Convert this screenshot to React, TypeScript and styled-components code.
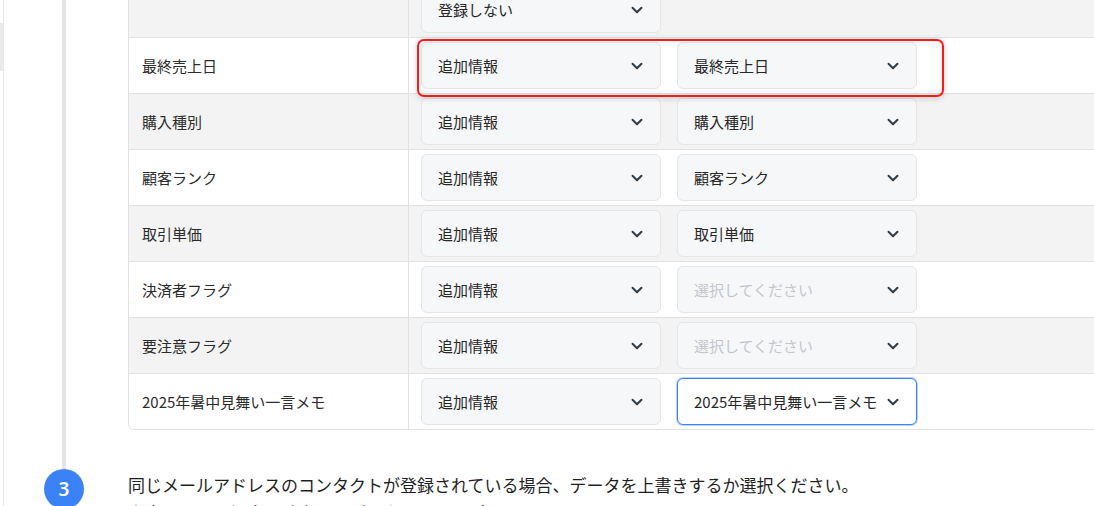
import React from 'react';
import styled, { createGlobalStyle } from 'styled-components';

const GlobalStyle = createGlobalStyle`
    html, body {
        margin: 0;
        padding: 0;
        background: #ffffff;
        overflow: hidden;
    }
    body {
        font-family: "Noto Sans CJK JP", "Noto Sans", sans-serif;
        color: #262626;
    }
`;

const Page = styled.div`
    display: flex;
    width: 1094px;
    height: 506px;
    overflow: hidden;
`;

const Sidebar = styled.div`
    width: 3px;
    flex-shrink: 0;
    border-right: 1px solid #e5e7eb;
    padding-top: 23px;
`;

const SidebarActive = styled.div`
    height: 48px;
    background: #e9eaec;
`;

const Main = styled.div`
    flex: 1;
    min-width: 0;
    margin-top: -19px;
`;

const Step = styled.div`
    display: grid;
    grid-template-columns: 124px 1000px;
`;

const Rail = styled.div`
    display: flex;
    flex-direction: column;
`;

const RailLine = styled.div`
    flex: 1;
    width: 4px;
    margin-left: 58px;
    background: #e5e5e5;
`;

const StepBadge = styled.div`
    width: 40px;
    height: 40px;
    margin-left: 40px;
    margin-top: -1px;
    border-radius: 50%;
    background: #3b82f6;
    color: #ffffff;
    display: flex;
    align-items: center;
    justify-content: center;
    font-family: "Noto Sans", "Noto Sans CJK JP", sans-serif;
    font-size: 19px;
    font-weight: 600;
`;

const StepBody = styled.div`
    padding-bottom: ${(props: { $pad?: number }) => props.$pad ?? 0}px;
`;

const Table = styled.div`
    border: 1px solid #e2e2e2;
    border-radius: 6px;
`;

const Row = styled.div<{ $striped: boolean; $last?: boolean }>`
    display: grid;
    grid-template-columns: 280px 1fr;
    background: ${(p) => (p.$striped ? '#f3f3f3' : '#ffffff')};
    border-bottom: ${(p) => (p.$last ? 'none' : '1px solid #e2e2e2')};
    border-radius: ${(p) => (p.$last ? '0 0 6px 6px' : '0')};
`;

const LabelCell = styled.div`
    display: flex;
    align-items: center;
    padding: 0 13px;
    border-right: 1px solid #e2e2e2;
    font-size: 15px;
    color: #2b2b2b;
`;

const ValueCell = styled.div`
    position: relative;
    display: flex;
    gap: 16px;
    padding: 4px 12px;
`;

const SelectBox = styled.div<{ $focused?: boolean }>`
    width: 240px;
    height: 47px;
    box-sizing: border-box;
    display: flex;
    align-items: center;
    justify-content: space-between;
    padding: 0 14px 0 16px;
    border-radius: 6px;
    border: 1px solid ${(p) => (p.$focused ? '#3b82f6' : '#e3e5e9')};
    background: ${(p) => (p.$focused ? '#ffffff' : '#f6f7f9')};
    box-shadow: ${(p) => (p.$focused ? '0 0 0 1px rgba(59,130,246,0.35)' : 'none')};
`;

const SelectText = styled.span<{ $placeholder?: boolean }>`
    font-size: 15px;
    color: ${(p) => (p.$placeholder ? '#c3c6cc' : '#262626')};
    white-space: nowrap;
    overflow: hidden;
`;

const Highlight = styled.div`
    position: absolute;
    left: 8px;
    top: 1px;
    width: 527px;
    height: 58px;
    box-sizing: border-box;
    border: 2px solid #ff1a1a;
    border-radius: 7px;
    box-shadow: 0 1px 6px rgba(0, 0, 0, 0.18), inset 0 0 6px rgba(0, 0, 0, 0.12);
    z-index: 2;
    pointer-events: none;
`;

const Notice = styled.div`
    padding-top: 1px;
    font-size: 17px;
    line-height: 28px;
    color: #1f1f1f;
`;

const Chevron = () => (
    <svg width="18" height="18" viewBox="0 0 24 24" fill="none" stroke="#2f3a4b" strokeWidth="2.6" strokeLinecap="round" strokeLinejoin="round">
        <path d="m6 9 6 6 6-6" />
    </svg>
);

type SelectProps = { value?: string; placeholder?: string; focused?: boolean };

const Select = ({ value, placeholder, focused }: SelectProps) => (
    <SelectBox $focused={focused}>
        <SelectText $placeholder={!value}>{value ?? placeholder}</SelectText>
        <Chevron />
    </SelectBox>
);

const rows = [
    { label: '最終売上日', field: '最終売上日', highlight: true },
    { label: '購入種別', field: '購入種別' },
    { label: '顧客ランク', field: '顧客ランク' },
    { label: '取引単価', field: '取引単価' },
    { label: '決済者フラグ' },
    { label: '要注意フラグ' },
    { label: '2025年暑中見舞い一言メモ', field: '2025年暑中見舞い一言メモ', focused: true },
];

export const App = () => {
    return (
        <>
            <GlobalStyle />
            <Page>
                <Sidebar>
                    <SidebarActive />
                </Sidebar>
                <Main>
                    <Step>
                        <Rail>
                            <RailLine />
                        </Rail>
                        <StepBody $pad={40}>
                            <Table>
                                <Row $striped>
                                    <LabelCell />
                                    <ValueCell>
                                        <Select value="登録しない" />
                                    </ValueCell>
                                </Row>
                                {rows.map((row, i) => (
                                    <Row key={row.label} $striped={i % 2 === 1} $last={i === rows.length - 1}>
                                        <LabelCell>{row.label}</LabelCell>
                                        <ValueCell>
                                            <Select value="追加情報" />
                                            <Select value={row.field} placeholder="選択してください" focused={row.focused} />
                                            {row.highlight && <Highlight />}
                                        </ValueCell>
                                    </Row>
                                ))}
                            </Table>
                        </StepBody>
                    </Step>
                    <Step>
                        <Rail>
                            <StepBadge>3</StepBadge>
                        </Rail>
                        <Notice>
                            同じメールアドレスのコンタクトが登録されている場合、データを上書きするか選択ください。
                            <br />
                            上書きしない場合、該当するデータはスキップします。
                        </Notice>
                    </Step>
                </Main>
            </Page>
        </>
    );
};

export default App;
